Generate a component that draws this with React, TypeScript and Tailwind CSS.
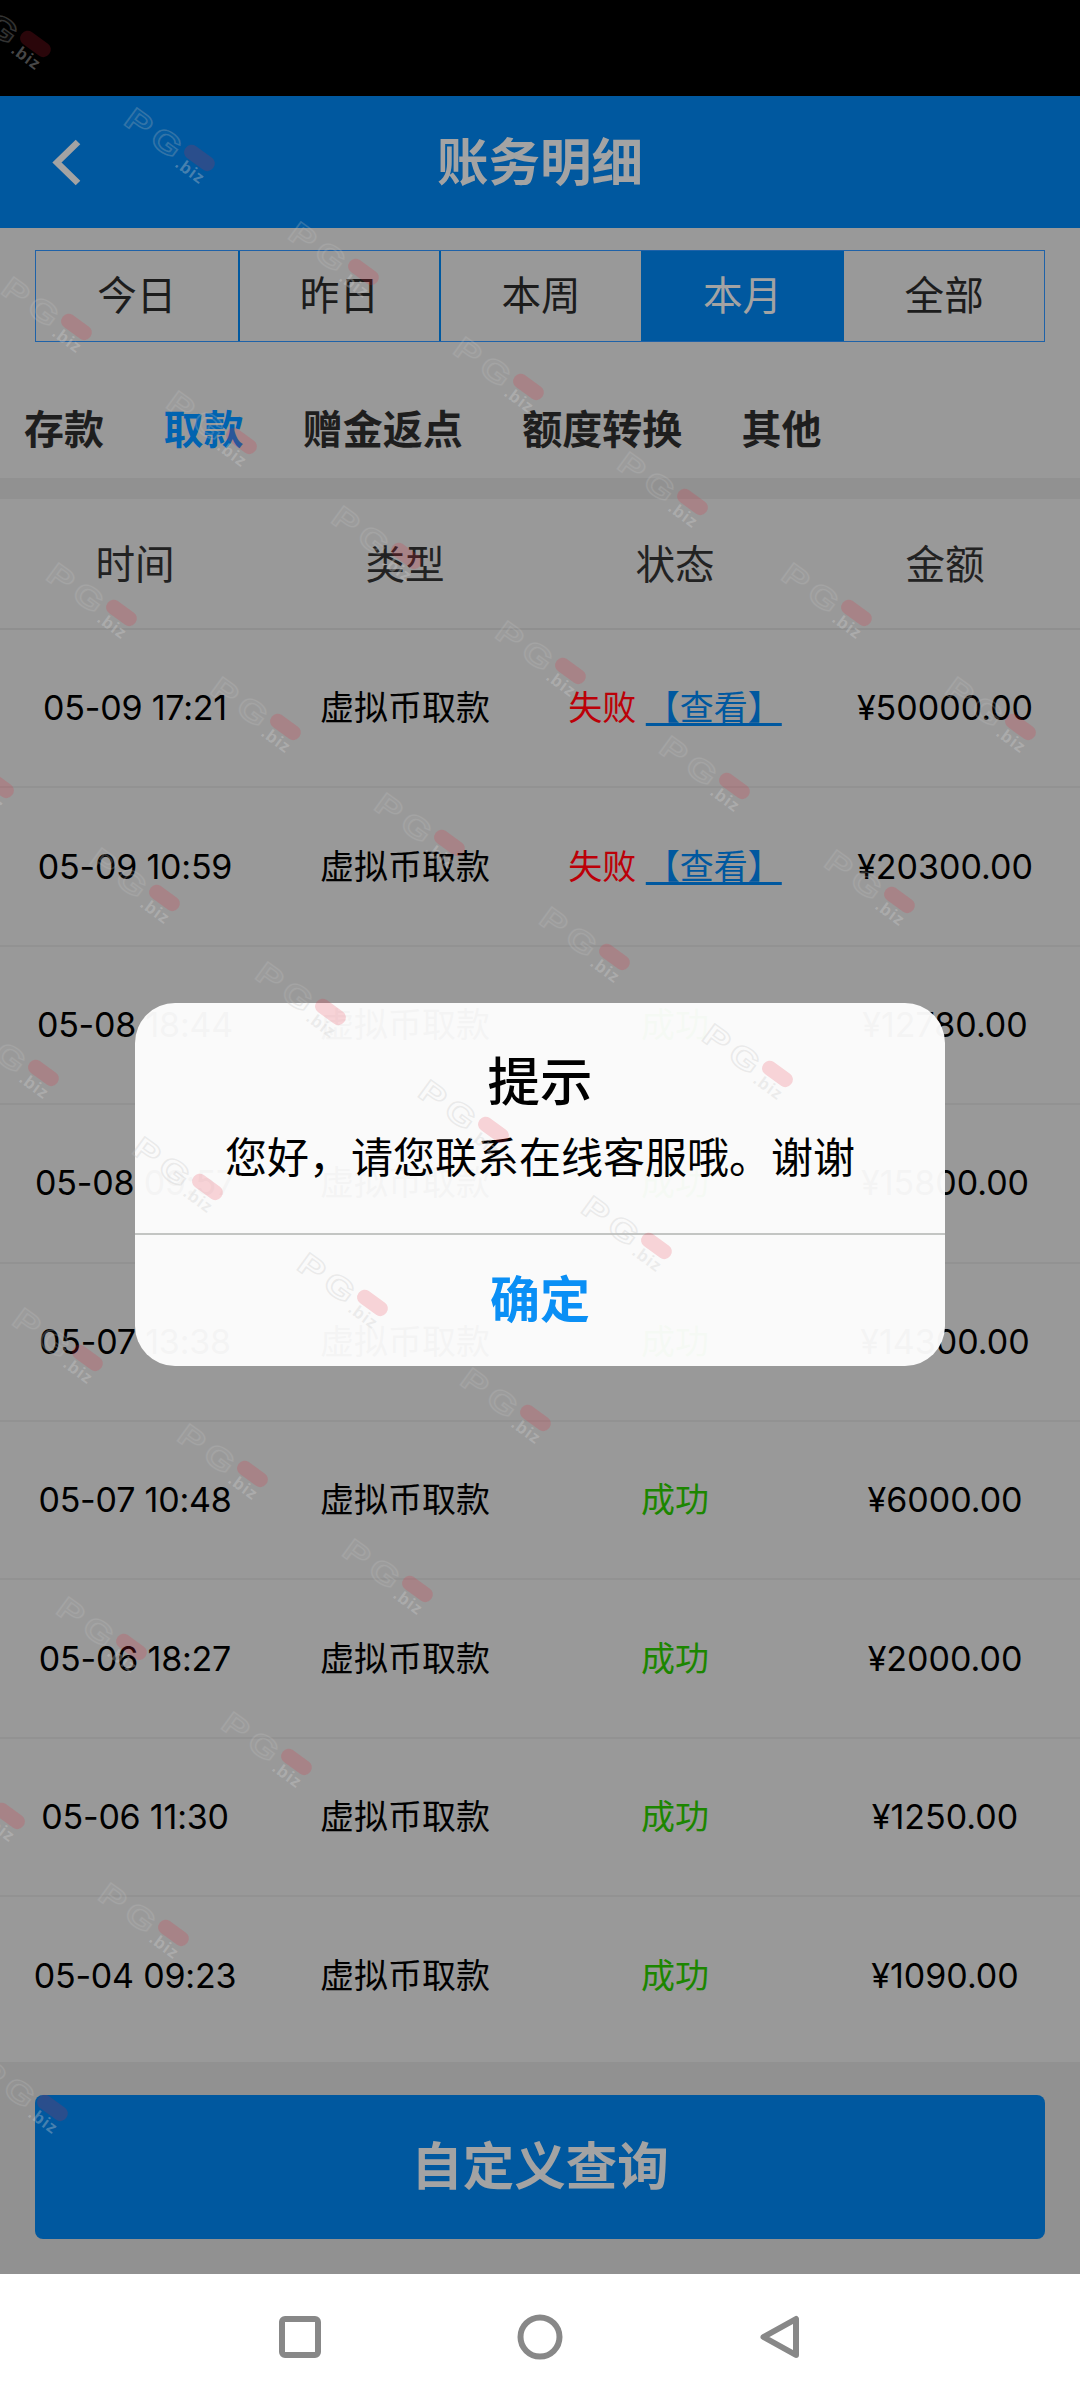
import React from 'react';

interface WithdrawRecord {
  time: string;
  amount: string;
  failed?: boolean;
}

const ranges = ['今日', '昨日', '本周', '本月', '全部'];
const categories = ['存款', '取款', '赠金返点', '额度转换', '其他'];
const columns = ['时间', '类型', '状态', '金额'];

const records: WithdrawRecord[] = [
  { time: '05-09 17:21', amount: '¥50000.00', failed: true },
  { time: '05-09 10:59', amount: '¥20300.00', failed: true },
  { time: '05-08 18:44', amount: '¥12780.00' },
  { time: '05-08 09:57', amount: '¥15800.00' },
  { time: '05-07 13:38', amount: '¥14300.00' },
  { time: '05-07 10:48', amount: '¥6000.00' },
  { time: '05-06 18:27', amount: '¥2000.00' },
  { time: '05-06 11:30', amount: '¥1250.00' },
  { time: '05-04 09:23', amount: '¥1090.00' },
];

// centre of the letter P of every stamp
const stamps = [
  [-24, 4], [140, 118], [304, 232], [469, 347], [633, 462], [797, 573], [961, 687],
  [17, 287], [182, 401], [347, 516], [511, 631], [675, 746], [840, 860],
  [62, 573], [226, 687], [390, 803], [555, 917], [718, 1034],
  [-61, 745], [105, 858], [271, 972], [434, 1090], [597, 1206],
  [-16, 1033], [148, 1147], [313, 1263], [476, 1378],
  [28, 1318], [193, 1434], [358, 1549],
  [72, 1607], [237, 1722],
  [-50, 1776], [114, 1893],
  [-7, 2068],
];

const Watermark = () => (
  <svg className="pointer-events-none absolute inset-0" width="1080" height="2400">
    {stamps.map(([x, y]) => (
      <g key={`${x}-${y}`} transform={`translate(${x + 1} ${y + 3}) rotate(36)`}>
        <g fontFamily="Liberation Sans" fontWeight="bold">
          <text transform="scale(1.25 1)" x="-11" y="13" fontSize="31" letterSpacing="5" fill="#fff" fillOpacity="0.05" stroke="#bdbdbd" strokeOpacity="0.26" strokeWidth="1.5">PG</text>
          <text x="53" y="17" fontSize="17" letterSpacing="1" fill="#d0d0d0" fillOpacity="0.35">.biz</text>
        </g>
        <rect x="52" y="-12" width="34" height="15" rx="7" fill="#e8203a" fillOpacity="0.18" />
      </g>
    ))}
  </svg>
);

export default function App() {
  return (
    <div className="relative flex h-[2400px] w-[1080px] flex-col overflow-hidden bg-[#999999] font-['Inter','Noto_Sans_CJK_SC',sans-serif] text-black">
      {/* Status bar */}
      <div className="h-24 bg-black" />

      {/* Header */}
      <header className="grid h-[132px] grid-cols-[135px_1fr_135px] items-center bg-[#00589f] text-[#a3a3a3]">
        <svg className="ml-[50px]" width="32" height="48" viewBox="0 0 32 48" fill="none" stroke="currentColor" strokeWidth="6.5">
          <path d="M28 4 L7 24.5 L28 45" />
        </svg>
        <h1 className="pt-[2px] text-center text-[51.5px] leading-none font-bold">账务明细</h1>
      </header>

      {/* Date range */}
      <div className="mx-[35px] mt-[22px] flex h-[92px] border border-[#1f62a8] text-[39.6px] text-[#1c1c1c]">
        {ranges.map((range, index) => (
          <div
            key={range}
            className={`flex w-1/5 items-center justify-center border-[#00589f] pt-px ${index > 0 ? 'border-l-2' : ''} ${
              range === '本月' ? 'bg-[#00589f] text-[#a3a3a3]' : ''
            }`}
          >
            {range}
          </div>
        ))}
      </div>

      {/* Categories */}
      <div className="flex h-[136px] items-center gap-[59.4px] pt-[40px] pl-6 text-[40px] font-bold text-[#1e1e1e]">
        {categories.map(category => (
          <span key={category} className={category === '取款' ? 'text-[#0063b0]' : ''}>{category}</span>
        ))}
      </div>
      <div className="h-[21px] shrink-0 bg-[#919191]" />

      {/* Records */}
      <div className="grid h-[131px] shrink-0 grid-cols-4 items-center border-b-2 border-[#8f8f8f] pt-[5px] text-center text-[39.6px] text-[#222]">
        {columns.map(column => <span key={column}>{column}</span>)}
      </div>
      <div className="h-[1432px] shrink-0">
        {records.map(record => (
          <div key={record.time} className="grid h-[158.4px] grid-cols-4 items-center border-b-2 border-[#929292] pb-px text-center text-[34px] last:border-0">
            <span className="tracking-[-0.2px]">{record.time}</span>
            <span>虚拟币取款</span>
            {record.failed ? (
              <span className="whitespace-nowrap text-[#bc0008]">
                失败 <a className="text-[#00589f] underline decoration-[3px] underline-offset-[3px] [text-decoration-skip-ink:none]">【查看】</a>
              </span>
            ) : (
              <span className="text-[#1c8600]">成功</span>
            )}
            <span>{record.amount}</span>
          </div>
        ))}
      </div>

      {/* Custom query */}
      <div className="h-[212px] shrink-0 bg-[#919191] px-[35px] pt-[33px]">
        <button className="h-36 w-full rounded-lg bg-[#00589f] text-[51.5px] font-bold text-[#a3a3a3]">自定义查询</button>
      </div>

      {/* System navigation */}
      <nav className="flex flex-1 justify-center bg-white">
        <svg width="580" height="126" fill="none" stroke="#888" strokeWidth="6" strokeLinejoin="round">
          <rect x="32" y="45" width="36" height="36" rx="3" />
          <circle cx="290" cy="63" r="19.5" />
          <path d="M513.5 63 L546 45 V81 Z" />
        </svg>
      </nav>

      {/* Dialog */}
      <div className="absolute top-[1003px] left-[135px] flex h-[363px] w-[810px] flex-col rounded-[40px] bg-[#fefefe]/96 text-center">
        <div className="h-[232px] border-b-2 border-[#c3c5c3]">
          <h2 className="mt-[53px] text-[52.5px] leading-[52px] font-medium">提示</h2>
          <p className="mt-[29px] text-[42px] leading-[42px]">您好，请您联系在线客服哦。谢谢</p>
        </div>
        <button className="flex-1 text-[50px] font-bold text-[#0a8ff5]">确定</button>
      </div>

      <Watermark />
    </div>
  );
}
